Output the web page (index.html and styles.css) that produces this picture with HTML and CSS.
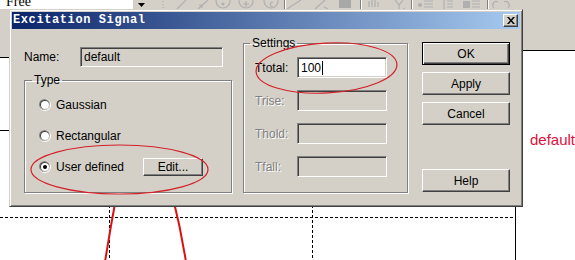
FILE: index.html
```html
<!DOCTYPE html>
<html>
<head>
<meta charset="utf-8">
<title>Excitation Signal</title>
<link rel="stylesheet" href="styles.css">
</head>
<body>
<div class="app">
  <div class="toolbar">
    <div class="combo">
      <span class="combo-text">Free</span>
      <span class="combo-btn"><svg width="7" height="4" viewBox="0 0 7 4"><path d="M0 0H7L3.5 4Z" fill="#000"/></svg></span>
    </div>
    <svg class="tools" width="425" height="10" viewBox="150 0 425 10">
      <g fill="none" stroke="#b0b0b0" stroke-width="1.2">
        <path d="M163 1v1M163 4v1M163 7v1"/>
        <path d="M177 9L186 0"/>
        <path d="M198 9L208 0M199 5h3v3"/>
        <circle cx="223" cy="1" r="7"/>
        <circle cx="246" cy="1" r="7"/>
        <path d="M243 4h6M246 1v6"/>
        <circle cx="271" cy="1" r="7"/>
        <path d="M273 2c-3 0-4 4 0 5"/>
        <path d="M287 9L301 0"/>
        <path d="M315 9L325 0M324 7l4 2"/>
        <path d="M369 1v6M372 0v7M375 0v7M378 2v5"/>
        <path d="M395 0l4 5 4-5M399 5v4M404 8v1"/>
        <path d="M424 1h9M424 4h9M424 7h9"/>
        <path d="M444 0v9M447 1h6M447 4h6M447 7h6"/>
        <path d="M472 1h8M472 4h8M472 7h8"/>
        <path d="M494 8c-3-3 0-8 4-6M508 8c3-3 0-8-4-6"/>
      </g>
      <g stroke="#808080" stroke-width="1">
        <path d="M284.5 0v10M360.5 0v10M411.5 0v10M487.5 0v10"/>
      </g>
      <g stroke="#ffffff" stroke-width="1">
        <path d="M285.5 0v10M361.5 0v10M412.5 0v10M488.5 0v10"/>
      </g>
      <circle cx="223" cy="4" r="1.5" fill="#b0b0b0"/>
      <circle cx="420" cy="5" r="2" fill="#b0b0b0"/>
      <rect x="339" y="0" width="12" height="8" fill="#a8a8a8"/>
      <rect x="463" y="1" width="7" height="7" fill="#b0b0b0"/>
    </svg>
  </div>
  <div class="canvas">
    <svg class="diagram" width="575" height="210" viewBox="0 50 575 210">
      <path d="M9 50.5H575" stroke="#000" stroke-width="1"/>
      <rect x="0" y="50" width="9" height="7" fill="#d4d0c8"/>
      <path d="M0 57.5H9M0 130.5H100" stroke="#000" stroke-width="1"/>
      <path d="M0 217.5H515" stroke="#000" stroke-width="1" stroke-dasharray="3 2"/>
      <path d="M109.5 200V260M312.5 200V260" stroke="#000" stroke-width="1" stroke-dasharray="3 2"/>
      <path d="M515.5 51V260" stroke="#000" stroke-width="1"/>
      <path d="M116 198Q110 230 105 262M173 198Q181 230 186 262" fill="none" stroke="#dd1010" stroke-width="2"/>
      <text x="530" y="145" class="node-label">default</text>
    </svg>
  </div>
</div>

<div class="dialog">
  <div class="titlebar">
    <span class="title">Excitation Signal</span>
    <span class="close"><svg width="8" height="7" viewBox="0 0 8 7"><path d="M0 0h2l2 2.5L6 0h2L5 3.5 8 7H6L4 4.5 2 7H0l3-3.5Z" fill="#000"/></svg></span>
  </div>
  <div class="body">
    <div class="left-col">
      <div class="name-row">
        <span class="name-label">Name:</span>
        <div class="field field-gray name-field">default</div>
      </div>
      <fieldset class="group type-group">
        <legend class="legend legend-type">Type</legend>
        <div class="type-inner">
          <div class="radio-row">
            <svg class="radio" width="12" height="12" viewBox="0 0 12 12"><circle cx="6" cy="6" r="6" fill="#fff"/><circle cx="5.5" cy="5.5" r="5.5" fill="#808080"/><circle cx="6" cy="6" r="5" fill="#d4d0c8"/><circle cx="5.6" cy="5.6" r="4.6" fill="#404040"/><circle cx="6" cy="6" r="4" fill="#fff"/></svg>
            <span class="radio-label">Gaussian</span>
          </div>
          <div class="radio-row">
            <svg class="radio" width="12" height="12" viewBox="0 0 12 12"><circle cx="6" cy="6" r="6" fill="#fff"/><circle cx="5.5" cy="5.5" r="5.5" fill="#808080"/><circle cx="6" cy="6" r="5" fill="#d4d0c8"/><circle cx="5.6" cy="5.6" r="4.6" fill="#404040"/><circle cx="6" cy="6" r="4" fill="#fff"/></svg>
            <span class="radio-label">Rectangular</span>
          </div>
          <div class="radio-row">
            <svg class="radio" width="12" height="12" viewBox="0 0 12 12"><circle cx="6" cy="6" r="6" fill="#fff"/><circle cx="5.5" cy="5.5" r="5.5" fill="#808080"/><circle cx="6" cy="6" r="5" fill="#d4d0c8"/><circle cx="5.6" cy="5.6" r="4.6" fill="#404040"/><circle cx="6" cy="6" r="4" fill="#fff"/><circle cx="6" cy="6" r="2" fill="#000"/></svg>
            <span class="radio-label radio-label-fixed">User defined</span>
            <button class="btn edit-btn">Edit...</button>
          </div>
        </div>
      </fieldset>
    </div>

    <fieldset class="group settings-group">
      <legend class="legend legend-settings">Settings</legend>
      <div class="settings-inner">
        <div class="set-row">
          <span class="set-label">Ttotal:</span>
          <div class="field field-white">100<span class="caret"></span></div>
        </div>
        <div class="set-row">
          <span class="set-label disabled">Trise:</span>
          <div class="field field-gray"></div>
        </div>
        <div class="set-row">
          <span class="set-label disabled">Thold:</span>
          <div class="field field-gray"></div>
        </div>
        <div class="set-row">
          <span class="set-label disabled">Tfall:</span>
          <div class="field field-gray"></div>
        </div>
      </div>
    </fieldset>

    <div class="btn-col">
      <button class="btn btn-default">OK</button>
      <button class="btn">Apply</button>
      <button class="btn">Cancel</button>
      <button class="btn btn-help">Help</button>
    </div>
  </div>
</div>

<svg class="annot" width="575" height="260" viewBox="0 0 575 260">
  <ellipse cx="119.5" cy="169.5" rx="88.5" ry="24.5" fill="none" stroke="#d42028" stroke-width="1.2"/>
  <ellipse cx="326.5" cy="68" rx="70.5" ry="25" fill="none" stroke="#d42028" stroke-width="1.2" transform="rotate(-3 326.5 68)"/>
</svg>
</body>
</html>
```

FILE: styles.css
```css
* { box-sizing: border-box; }
html, body { margin: 0; padding: 0; }
body {
  width: 575px;
  height: 260px;
  overflow: hidden;
  position: relative;
  background: #fff;
  font-family: "Liberation Sans", Arial, sans-serif;
  font-size: 12px;
  color: #000;
}

.app { display: flex; flex-direction: column; height: 260px; }

.toolbar {
  height: 50px;
  flex: none;
  background: #d4d0c8;
  display: flex;
  align-items: flex-start;
}
.combo { display: flex; margin-top: -5px; height: 14px; flex: none; }
.combo-text {
  width: 133px;
  background: #fff;
  font-family: "Liberation Serif", serif;
  font-size: 14px;
  line-height: 14px;
  padding-left: 6px;
}
.combo-btn {
  width: 17px;
  background: #d4d0c8;
  display: flex;
  align-items: flex-end;
  justify-content: center;
  padding-bottom: 2px;
}
.tools { display: block; flex: none; }

.canvas { flex: 1; }
.diagram { display: block; }
.node-label { font-family: "Liberation Sans", Arial, sans-serif; font-size: 15px; fill: #e0103a; }

/* dialog window */
.dialog {
  position: absolute;
  left: 9px;
  top: 9px;
  width: 514px;
  height: 198px;
  background: #d4d0c8;
  border: 1px solid;
  border-color: #d4d0c8 #404040 #404040 #d4d0c8;
  box-shadow: inset 1px 1px 0 #fff, inset -1px -1px 0 #808080;
  padding: 2px;
  display: flex;
  flex-direction: column;
}
.titlebar {
  height: 17px;
  flex: none;
  background: linear-gradient(to right, #0a246a, #a6caf0);
  display: flex;
  align-items: center;
  justify-content: space-between;
}
.title {
  color: #fff;
  font-family: "Liberation Mono", monospace;
  font-weight: bold;
  font-size: 12px;
  letter-spacing: 0.6px;
  padding-left: 1px;
  line-height: 17px;
}
.close {
  width: 15px;
  height: 13px;
  margin-right: 2px;
  background: #d4d0c8;
  border: 1px solid;
  border-color: #fff #404040 #404040 #fff;
  box-shadow: inset -1px -1px 0 #808080;
  display: flex;
  align-items: center;
  justify-content: center;
}
.close svg { display: block; }

.body {
  flex: 1;
  display: flex;
  align-items: flex-start;
  padding: 7px 0 0 12px;
}

.left-col {
  width: 208px;
  margin-top: 11px;
  display: flex;
  flex-direction: column;
  gap: 6px;
}
.name-row { display: flex; align-items: center; height: 20px; }
.name-label { width: 56px; }
.name-field { width: 143px; height: 20px; padding-left: 3px; }

.field {
  border: 1px solid;
  border-color: #808080 #fff #fff #808080;
  box-shadow: inset 1px 1px 0 #404040, inset -1px -1px 0 #d4d0c8;
  display: flex;
  align-items: center;
  line-height: 14px;
}
.field-gray { background: #d4d0c8; }
.field-white { background: #fff; }

.group {
  margin: 0;
  padding: 0;
  min-width: 0;
  border: 1px solid #808080;
  box-shadow: inset 1px 1px 0 #fff, 1px 1px 0 #fff;
}
.legend {
  padding: 0 2px;
  line-height: 14px;
  font-size: 12px;
}
.legend-type { margin-left: 7px; }
.legend-settings { margin-left: 6px; }

.type-group { width: 208px; height: 120px; }
.type-inner {
  padding: 8px 0 0 14px;
  display: flex;
  flex-direction: column;
  gap: 11px;
}
.radio-row { display: flex; align-items: center; height: 20px; }
.radio { display: block; flex: none; margin-right: 5px; }
.radio-label-fixed { width: 87px; flex: none; }

.settings-group {
  width: 165px;
  height: 157px;
  margin-left: 11px;
}
.settings-inner {
  padding: 7px 0 0 11px;
  display: flex;
  flex-direction: column;
  gap: 12px;
}
.set-row { display: flex; align-items: center; height: 21px; }
.set-label { width: 42px; flex: none; }
.set-label.disabled { color: #808080; text-shadow: 1px 1px 0 #fff; }
.set-row .field { width: 90px; height: 21px; padding-left: 3px; }
.caret { display: inline-block; width: 1px; height: 14px; background: #000; margin-left: 1px; }

.btn {
  font-family: "Liberation Sans", Arial, sans-serif;
  font-size: 12px;
  color: #000;
  background: #d4d0c8;
  border: 1px solid;
  border-color: #fff #404040 #404040 #fff;
  box-shadow: inset -1px -1px 0 #808080;
  padding: 0;
  margin: 0;
  display: flex;
  align-items: center;
  justify-content: center;
}
.edit-btn { width: 60px; height: 18px; }

.btn-col {
  width: 88px;
  height: 150px;
  margin-left: 14px;
  margin-top: 6px;
  display: flex;
  flex-direction: column;
  gap: 7px;
}
.btn-col .btn { height: 23px; width: 88px; flex: none; }
.btn-default {
  border: 1px solid #000;
  box-shadow: inset 1px 1px 0 #fff, inset -1px -1px 0 #404040, inset -2px -2px 0 #808080;
}
.btn-help { margin-top: auto; }

.annot {
  position: absolute;
  left: 0;
  top: 0;
  pointer-events: none;
}
```
